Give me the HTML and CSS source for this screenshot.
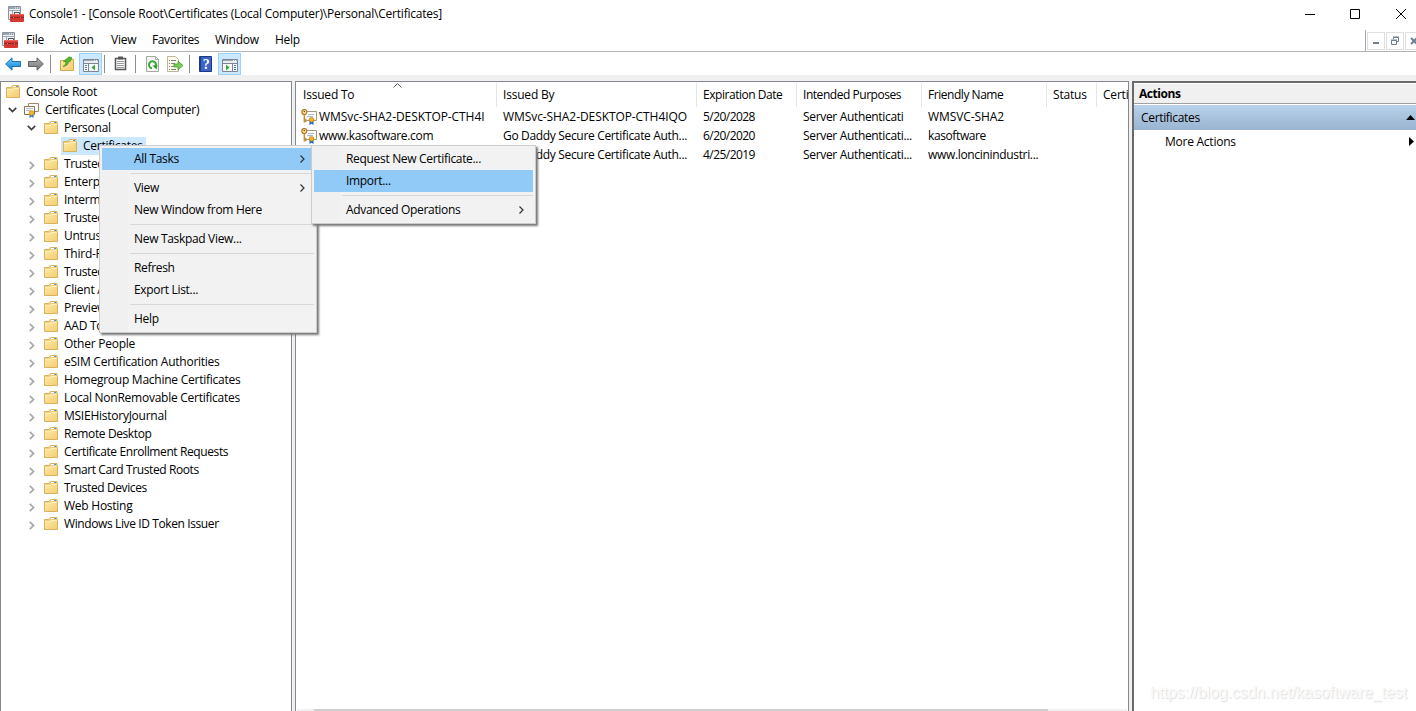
FILE: index.html
```
<!DOCTYPE html>
<html lang="en">
<head>
<meta charset="utf-8">
<title>Console1</title>
<link rel="stylesheet" href="styles.css">
</head>
<body>
<svg class="defs" width="0" height="0">
  <defs>
    <linearGradient id="gold" x1="0" y1="0" x2="1" y2="1"><stop offset="0" stop-color="#ffe9a6"/><stop offset="1" stop-color="#f3cd72"/></linearGradient>
    <linearGradient id="blue" x1="0" y1="0" x2="0" y2="1"><stop offset="0" stop-color="#6fd0fa"/><stop offset="1" stop-color="#0c7fd4"/></linearGradient>
    <linearGradient id="gray" x1="0" y1="0" x2="0" y2="1"><stop offset="0" stop-color="#b5b5b5"/><stop offset="1" stop-color="#747474"/></linearGradient>
    <symbol id="folder" viewBox="0 0 14 13">
      <path d="M.5 12.500V2.500h4.500l1.500-2h6.500v2h.5v10z" fill="#f0cf7c" stroke="#d9b35c"/>
      <path d="M7 1.500h5" stroke="#fff"/><path d="M10 1.500h2" stroke="#4c9ad6"/>
      <path d="M1 4h5l1-1h6v9H1z" fill="url(#gold)"/>
      <path d="M1 4.500h5.500l1-1H13" fill="none" stroke="#fff2c6" stroke-width=".8"/>
    </symbol>
    <symbol id="open" viewBox="0 0 9 6"><path d="M.8.8 4.500 4.500 8.200.8" fill="none" stroke="#404040" stroke-width="1.700"/></symbol>
    <symbol id="shut" viewBox="0 0 6 9"><path d="M.8.8 4.500 4.500.8 8.200" fill="none" stroke="#a6a6a6" stroke-width="1.700"/></symbol>
    <symbol id="more" viewBox="0 0 5 8"><path d="M.5.5 4 4 .5 7.500" fill="none" stroke="#333" stroke-width="1.200"/></symbol>
    <symbol id="console" viewBox="0 0 16 16">
      <path d="M.5.5h12v13H.5z" fill="#eef1f4" stroke="#8c959f"/>
      <path d="M1 2h11" stroke="#9ba5b1" stroke-width="2"/><path d="M7 2h1M9 2h1M11 2h1" stroke="#fff"/>
      <path d="M1 4.500h11M4.500 5v6M6 6.500h4" stroke="#a1a9b2"/>
      <path d="M6.500 8.500v-2h5v2" fill="none" stroke="#555"/>
      <path d="M2 9q0-1 1-1h12q1 0 1 1v6q0 1-1 1H3q-1 0-1-1z" fill="#d73833"/>
      <path d="M2 11.500h14" stroke="#a81d19"/><path d="M3 8.700h12" stroke="#ee716a"/>
      <path d="M5 10.500h1v2H5zM12 10.500h1v2h-1z" fill="#eee" stroke="#6b1c18" stroke-width=".5"/>
    </symbol>
    <symbol id="certs" viewBox="0 0 15 15">
      <path d="M4.500.5h10v8h-10z" fill="#fff" stroke="#9a8a6c"/>
      <path d="M.5 3.500h10v8H.5z" fill="#fff" stroke="#887455"/>
      <path d="M2 5.500h7M2 7.500h5" stroke="#b3bdd0"/>
      <path d="M5.500 11v4l2-1.500 2 1.500v-4z" fill="#2370c8"/><circle cx="7.500" cy="10" r="2.400" fill="#f5b625" stroke="#c98410" stroke-width=".6"/>
    </symbol>
    <symbol id="cert" viewBox="0 0 16 16">
      <path d="M3.500 2.500h12v9h-12z" fill="#fff" stroke="#a59780"/>
      <path d="M7 5.500h6M6 7.500h6" stroke="#a9b7d0"/>
      <path d="M3.300 5v8.500M3.500 10.500h2M3.500 12.500h2" stroke="#c98f35" stroke-width="1.400"/>
      <circle cx="3.300" cy="3" r="2.500" fill="#ffe0a0" stroke="#b3781f" stroke-width="1.200"/><circle cx="3.300" cy="2.500" r=".8" fill="#74480a"/>
      <path d="M8.500 12v4l2-1.200 2 1.200v-4z" fill="#1667cf"/><circle cx="10.500" cy="10.800" r="2.400" fill="#f4b020" stroke="#b87912" stroke-width=".6"/>
    </symbol>
    <symbol id="arrow" viewBox="0 0 16 14"><path d="M.7 7 7 .8V4.500h8.500v5H7v3.700z"/></symbol>
    <symbol id="pane" viewBox="0 0 16 13">
      <path d="M.5.5h15v12H.5z" fill="#f6f8fa" stroke="#7b8692"/>
      <path d="M1 1.500h14" stroke="#9ba6b2"/><path d="M11 1.500h1M13 1.500h1" stroke="#fff"/>
      <path d="M1 4.500h14" stroke="#7b8692"/><path d="M1 3h14" stroke="#dce2e8"/>
    </symbol>
  </defs>
</svg>

<div class="window">
  <header class="titlebar">
    <svg class="app"><use href="#console"/></svg>
    <span class="caption">Console1 - [Console Root\Certificates (Local Computer)\Personal\Certificates]</span>
    <svg class="winbtns" width="104" height="12" fill="none" stroke="#000"><path d="M0 6.500h10M45.500 1.500h9v9h-9zM91 1l10 10M101 1 91 11"/></svg>
  </header>

  <nav class="menubar">
    <svg class="app"><use href="#console"/></svg>
    <span class="m-file">File</span><span class="m-action">Action</span><span class="m-view">View</span><span class="m-fav">Favorites</span><span class="m-window">Window</span><span>Help</span>
    <div class="mdi">
      <i><svg width="16" height="16"><path d="M5 10h6" stroke="#6e7f91" stroke-width="2"/></svg></i>
      <i><svg width="16" height="16" fill="none" stroke="#6e7f91"><path d="M6.500 6V4.500h5v4H10M6 4h6M4.500 7.500h5v4h-5zM4 7h6" /></svg></i>
      <i><svg width="16" height="16"><path d="m5 5 6 6M11 5l-6 6" stroke="#6e7f91" stroke-width="2"/></svg></i>
    </div>
  </nav>

  <div class="toolbar">
    <svg class="t-arrow" width="16" height="14" fill="url(#blue)" stroke="#1b6fab"><use href="#arrow"/></svg>
    <svg class="t-arrow" width="16" height="14" fill="url(#gray)" stroke="#606060"><g transform="matrix(-1 0 0 1 16 0)"><use href="#arrow"/></g></svg>
    <b class="sep"></b>
    <svg class="t-up" width="15" height="15"><path d="M.5 4.500h4l1-1h8v11H.5z" fill="url(#gold)" stroke="#d0a852"/><path d="M3 10.500q3-1.500 3-5H3.500L9 .8l3 1-2 4H8.500q-.5 4-5.500 4.700z" fill="#55b82c" stroke="#338718" stroke-width=".6"/></svg>
    <span class="toggled"><svg width="16" height="13"><use href="#pane"/><path d="M5.500 5v7" stroke="#7b8692"/><path d="M2 6.500h2M2 8.500h2M2 10.500h2" stroke="#4e7eb2"/><path d="M12 5.500v6L8.500 8.500z" fill="#3ba43b"/></svg></span>
    <b class="sep s2"></b>
    <svg class="t-clip" width="13" height="15"><path d="M1.500 2.500h10v11h-10z" fill="#fff" stroke="#555" stroke-width="1.500"/><path d="M4 .5h5v3H4z" fill="#555"/><path d="M3 5.500h7M3 7.500h7M3 9.500h7M3 11.500h7" stroke="#999"/></svg>
    <b class="sep s3"></b>
    <svg class="t-refresh" width="13" height="16"><path d="M.5.5h9l3 3v12H.5z" fill="#f8faf7" stroke="#a2a7a2"/><path d="M9.500.5v3h3" fill="none" stroke="#a2a7a2"/><path d="M6 12.200A3.500 3.500 0 1 1 10 9" fill="none" stroke="#36aa39" stroke-width="2"/><path d="m6.500 9.500 5-.5-1 4.500z" fill="#27952b"/></svg>
    <svg class="t-export" width="17" height="16"><path d="M.5.500h8l3 3v12H.5z" fill="#fffbe6" stroke="#bcb79f"/><path d="M2 4.500h1M4 4.500h5M2 7.500h1M4 7.500h4M2 10.500h1M4 10.500h4M2 13.500h1M4 13.500h5" stroke="#7d8294"/><path d="M7 8h4V5l5 4.500-5 4.500v-3H7z" fill="#7acb51" stroke="#3a972b" stroke-width=".7"/></svg>
    <b class="sep s4"></b>
    <svg class="t-help" width="13" height="16"><path d="M.5.5h12v15H.5z" fill="#3c63c6" stroke="#1e3787"/><path d="M1.500 1v14" stroke="#203c8d"/><text x="7" y="13" class="q">?</text></svg>
    <span class="toggled last"><svg width="16" height="13"><use href="#pane"/><path d="M10.500 5v7" stroke="#7b8692"/><path d="M12 6.500h2M12 8.500h2M12 10.500h2" stroke="#4e7eb2"/><path d="M4 5.500v6l3.500-3z" fill="#3ba43b"/></svg></span>
  </div>

  <main class="panes">
    <section class="tree">
      <div class="row root"><svg class="folder"><use href="#folder"/></svg><span>Console Root</span></div>
      <div class="row store"><svg class="open"><use href="#open"/></svg><svg class="certs"><use href="#certs"/></svg><span class="c-local">Certificates (Local Computer)</span></div>
      <div class="row personal"><svg class="open"><use href="#open"/></svg><svg class="folder"><use href="#folder"/></svg><span>Personal</span></div>
      <div class="row leaf"><div class="selected"><svg class="folder"><use href="#folder"/></svg><span>Certificates</span></div></div>
      <div class="row tight"><svg class="shut"><use href="#shut"/></svg><svg class="folder"><use href="#folder"/></svg><span>Trusted</span></div>
      <div class="row"><svg class="shut"><use href="#shut"/></svg><svg class="folder"><use href="#folder"/></svg><span>Enterprise</span></div>
      <div class="row"><svg class="shut"><use href="#shut"/></svg><svg class="folder"><use href="#folder"/></svg><span>Intermediate</span></div>
      <div class="row tight"><svg class="shut"><use href="#shut"/></svg><svg class="folder"><use href="#folder"/></svg><span>Trusted</span></div>
      <div class="row"><svg class="shut"><use href="#shut"/></svg><svg class="folder"><use href="#folder"/></svg><span>Untrusted</span></div>
      <div class="row"><svg class="shut"><use href="#shut"/></svg><svg class="folder"><use href="#folder"/></svg><span>Third-Party</span></div>
      <div class="row tight"><svg class="shut"><use href="#shut"/></svg><svg class="folder"><use href="#folder"/></svg><span>Trusted</span></div>
      <div class="row"><svg class="shut"><use href="#shut"/></svg><svg class="folder"><use href="#folder"/></svg><span>Client A</span></div>
      <div class="row"><svg class="shut"><use href="#shut"/></svg><svg class="folder"><use href="#folder"/></svg><span>Preview</span></div>
      <div class="row"><svg class="shut"><use href="#shut"/></svg><svg class="folder"><use href="#folder"/></svg><span>AAD To</span></div>
      <div class="row"><svg class="shut"><use href="#shut"/></svg><svg class="folder"><use href="#folder"/></svg><span>Other People</span></div>
      <div class="row"><svg class="shut"><use href="#shut"/></svg><svg class="folder"><use href="#folder"/></svg><span>eSIM Certification Authorities</span></div>
      <div class="row"><svg class="shut"><use href="#shut"/></svg><svg class="folder"><use href="#folder"/></svg><span>Homegroup Machine Certificates</span></div>
      <div class="row"><svg class="shut"><use href="#shut"/></svg><svg class="folder"><use href="#folder"/></svg><span>Local NonRemovable Certificates</span></div>
      <div class="row"><svg class="shut"><use href="#shut"/></svg><svg class="folder"><use href="#folder"/></svg><span>MSIEHistoryJournal</span></div>
      <div class="row tight"><svg class="shut"><use href="#shut"/></svg><svg class="folder"><use href="#folder"/></svg><span>Remote Desktop</span></div>
      <div class="row tight"><svg class="shut"><use href="#shut"/></svg><svg class="folder"><use href="#folder"/></svg><span>Certificate Enrollment Requests</span></div>
      <div class="row tight"><svg class="shut"><use href="#shut"/></svg><svg class="folder"><use href="#folder"/></svg><span>Smart Card Trusted Roots</span></div>
      <div class="row tight"><svg class="shut"><use href="#shut"/></svg><svg class="folder"><use href="#folder"/></svg><span>Trusted Devices</span></div>
      <div class="row"><svg class="shut"><use href="#shut"/></svg><svg class="folder"><use href="#folder"/></svg><span>Web Hosting</span></div>
      <div class="row tight"><svg class="shut"><use href="#shut"/></svg><svg class="folder"><use href="#folder"/></svg><span>Windows Live ID Token Issuer</span></div>
    </section>

    <section class="list">
      <svg class="sort" width="9" height="5"><path d="M.5 4.500l4-4 4 4" fill="none" stroke="#555"/></svg>
      <div class="grid head"><span>Issued To</span><span>Issued By</span><span class="tight">Expiration Date</span><span class="tight">Intended Purposes</span><span class="tight">Friendly Name</span><span>Status</span><span>Certi</span></div>
      <div class="grid"><span class="named"><svg><use href="#cert"/></svg><em class="caps">WMSvc-SHA2-DESKTOP-CTH4I</em></span><span class="caps">WMSvc-SHA2-DESKTOP-CTH4IQO</span><span class="date">5/20/2028</span><span>Server Authenticati</span><span class="caps">WMSVC-SHA2</span></div>
      <div class="grid"><span class="named"><svg><use href="#cert"/></svg><em class="host">www.kasoftware.com</em></span><span>Go Daddy Secure Certificate Auth...</span><span class="date">6/20/2020</span><span>Server Authenticati...</span><span class="tight">kasoftware</span></div>
      <div class="grid"><span class="named"></span><span>Go Daddy Secure Certificate Auth...</span><span class="date">4/25/2019</span><span>Server Authenticati...</span><span>www.loncinindustri...</span></div>
      <div class="scroll"><div class="thumb"></div></div>
    </section>

    <aside class="actions">
      <h2>Actions</h2>
      <div class="group"><span>Certificates</span><svg width="9" height="5"><path d="M0 5 4.500 0 9 5z"/></svg></div>
      <div class="action"><span>More Actions</span><svg width="5" height="9"><path d="M0 0 5 4.500 0 9z"/></svg></div>
      <p class="mark">https://blog.csdn.net/kasoftware_test</p>
    </aside>
  </main>

  <div class="popup context">
    <div class="item hot"><span>All Tasks</span><svg><use href="#more"/></svg></div>
    <hr>
    <div class="item"><span>View</span><svg><use href="#more"/></svg></div>
    <div class="item"><span>New Window from Here</span></div>
    <hr>
    <div class="item"><span>New Taskpad View...</span></div>
    <hr>
    <div class="item"><span>Refresh</span></div>
    <div class="item"><span>Export List...</span></div>
    <hr>
    <div class="item"><span>Help</span></div>
  </div>
  <div class="popup submenu">
    <div class="item"><span>Request New Certificate...</span></div>
    <div class="item hot"><span>Import...</span></div>
    <hr>
    <div class="item"><span>Advanced Operations</span><svg><use href="#more"/></svg></div>
  </div>
</div>
</body>
</html>
```
FILE: styles.css
```
* { box-sizing: border-box; }
body { margin: 0; overflow: hidden; font: 12px/18px "Open Sans", "Noto Sans", sans-serif; letter-spacing: -0.25px; color: #000; background: #fff; }
svg { flex: none; }
span, em { white-space: nowrap; font-style: normal; }
.defs { position: absolute; }
.window { position: relative; width: 1416px; height: 711px; display: flex; flex-direction: column; overflow: hidden; }

.titlebar { height: 30px; display: flex; align-items: center; padding: 0 7px 3px 8px; }
.caption { letter-spacing: -0.22px; }
.app { width: 16px; height: 16px; margin-right: 5px; }
.titlebar .winbtns { margin-left: auto; }
.menubar { height: 22px; display: flex; align-items: center; padding-left: 2px; padding-bottom: 2px; border-bottom: 1px solid #b4b4b4; }
.menubar .app { margin-right: 8px; }
.m-file { width: 34px; } .m-action { width: 51px; } .m-view { width: 41px; } .m-fav { width: 63px; letter-spacing: -0.4px; } .m-window { width: 60px; }
.mdi { margin-left: auto; width: 51px; height: 22px; margin-bottom: -2px; display: flex; gap: 1px; padding: 2px 0 0 1px; border-left: 1px solid #aaa; overflow: hidden; }
.mdi i { flex: none; width: 18px; height: 18px; border: 1px solid #e0e0e0; display: flex; }

.toolbar { height: 23px; display: flex; align-items: center; padding-left: 5px; }
.t-arrow { margin-right: 7px; }
.sep { width: 1px; height: 18px; background: #8d8d8d; margin: 0 9px 0 -1px; }
.toggled { width: 23px; height: 22px; margin: 0 1px 0 4px; border: 1px solid #99d1ff; background: #cce8ff; display: flex; align-items: flex-end; justify-content: center; padding-bottom: 2px; }
.s2 { margin: 0 9px 0 1px; } .s3 { margin: 0 10px 0 8px; } .t-export { margin-left: 8px; } .s4 { margin: 0 9px 0 5px; }
.last { margin-left: 6px; }
.q { font: bold 14px "Liberation Serif", serif; fill: #fff; text-anchor: middle; }

.panes { flex: 1; display: grid; grid-template-columns: 292px 834px 284px; column-gap: 3px; padding-top: 6px; background: #f0f0f0; min-height: 0; }
.tree, .list { background: #fff; border: 1px solid #828790; border-bottom: 0; min-width: 0; overflow: hidden; }
.tree { padding-top: 1px; }
.tight, .tight span { letter-spacing: -0.39px; }
.row { height: 18px; display: flex; align-items: center; padding-left: 28px; }
.folder { width: 14px; height: 13px; margin: -1px 6px 0 0; }
.shut { width: 6px; height: 9px; margin: 3px 9px 0 0; }
.open { width: 9px; height: 6px; }
.certs { width: 15px; height: 15px; margin: 0 6px 0 7px; }
.root { padding-left: 5px; } .store { padding-left: 7px; } .personal { padding-left: 26px; }
.personal .folder { margin-left: 8px; }
.leaf { padding-left: 60px; }
.selected { height: 18px; width: 85px; padding-left: 2px; display: flex; align-items: center; background: #cce8ff; }

.list { position: relative; display: flex; flex-direction: column; }
.sort { position: absolute; left: 97px; top: 1px; }
.grid { display: grid; grid-template-columns: 201px 200px 100px 125px 125px 50px 31px; height: 19px; line-height: 19px; letter-spacing: -0.33px; }
.grid > span { padding-left: 6px; overflow: hidden; }
.grid > span:first-child { padding-left: 7px; }
.grid .named { display: flex; align-items: center; }
.grid > .named:first-child { padding-left: 5px; }
.named svg { width: 16px; height: 16px; margin-right: 2px; }
.caps { letter-spacing: -0.08px; }
.date { letter-spacing: -0.58px; }
.grid .date { letter-spacing: -0.55px; }
.head { height: 25px; padding-top: 1px; letter-spacing: -0.2px; }
.head .tight { letter-spacing: -0.46px; }
.head span { border-right: 1px solid #e5e5e5; height: 24px; line-height: 24px; }
.head span:last-child { border: 0; }
.scroll { margin: auto 1px 0; height: 2px; background: #f0f0f0; }
.thumb { width: 734px; height: 2px; margin-left: 17px; background: #cdcdcd; }

.actions { background: #fff; border-top: 2px solid #696969; border-left: 2px solid #696969; display: flex; flex-direction: column; }
.actions h2 { margin: 1px 0 1px; height: 20px; font-size: 12px; line-height: 19px; padding-left: 5px; background: #f0f0f0; border-bottom: 1px solid #a0a0a0; letter-spacing: -0.45px; }
.group { height: 25px; display: flex; align-items: center; justify-content: space-between; padding: 0 1px 0 7px; background: linear-gradient(#b9d1ea, #99b4d1); letter-spacing: -0.33px; }
.action { height: 23px; display: flex; align-items: center; justify-content: space-between; padding: 0 2px 0 31px; }
.mark { margin: auto 9px 8px auto; font: 16px/20px "Liberation Sans", Arial, sans-serif; letter-spacing: -0.08px; color: #fafafa; text-shadow: 1px 1px 1px #ddd; }

.popup { position: absolute; padding: 2px; border: 1px solid #ccc; background: linear-gradient(90deg, #f0f0f0 28px, #f2f2f2 28px); box-shadow: 2px 2px 2px #777; letter-spacing: -0.32px; }
.context { left: 99px; top: 145px; width: 218px; height: 188px; }
.submenu { left: 311px; top: 145px; width: 225px; height: 79px; }
.item { height: 22px; display: flex; align-items: center; justify-content: space-between; padding: 0 9px 0 32px; }
.item svg { width: 5px; height: 8px; }
.hot { background: #91c9f7; }
.popup hr { height: 1px; margin: 3px 0 3px 28px; border: 0; background: #d7d7d7; }
```
